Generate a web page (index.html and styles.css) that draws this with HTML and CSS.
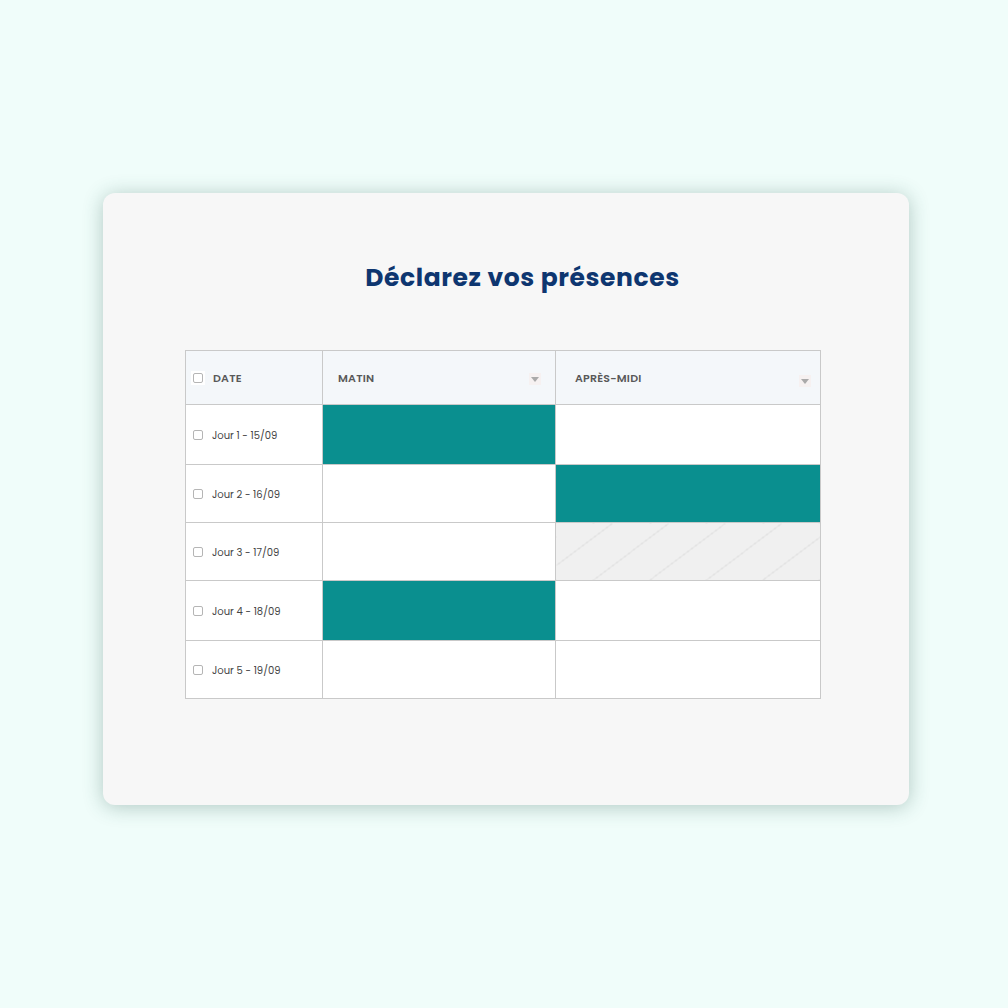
FILE: index.html
```html
<!DOCTYPE html>
<html lang="fr">
<head>
<meta charset="utf-8">
<title>Déclarez vos présences</title>
<link rel="stylesheet" href="styles.css">
</head>
<body>
<div class="card">
  <h1 class="title">Déclarez vos présences</h1>
  <table class="grid">
    <colgroup>
      <col class="c-date"><col class="c-matin"><col class="c-am">
    </colgroup>
    <thead>
      <tr>
        <th class="h-date"><span class="hbox"><span class="cb"></span></span>DATE</th>
        <th class="h-matin"><div class="hcell"><span>MATIN</span><span class="drop"></span></div></th>
        <th class="h-am"><div class="hcell"><span>APRÈS-MIDI</span><span class="drop"></span></div></th>
      </tr>
    </thead>
    <tbody>
      <tr class="r1"><td class="d"><span class="cb"></span>Jour 1 - 15/09</td><td class="on"></td><td></td></tr>
      <tr class="r2"><td class="d"><span class="cb"></span>Jour 2 - 16/09</td><td></td><td class="on"></td></tr>
      <tr class="r3"><td class="d"><span class="cb"></span>Jour 3 - 17/09</td><td></td><td class="off"></td></tr>
      <tr class="r4"><td class="d"><span class="cb"></span>Jour 4 - 18/09</td><td class="on"></td><td></td></tr>
      <tr class="r5"><td class="d"><span class="cb"></span>Jour 5 - 19/09</td><td></td><td></td></tr>
    </tbody>
  </table>
</div>
</body>
</html>
```
FILE: styles.css
```css
* { box-sizing: border-box; }
html, body { margin: 0; padding: 0; }
body {
  background: #f0fdfa;
  font-family: "Poppins", "Open Sans", "Noto Sans", sans-serif;
  padding: 193px 0 0 103px;
  min-height: 1008px;
}
.card {
  width: 806px;
  height: 612px;
  background: #f7f7f7;
  border-radius: 12px;
  box-shadow: 0 2px 20px rgba(40, 90, 80, 0.32);
  padding: 69px 89px 0 82px;
}
.title {
  margin: 0 0 56px 0;
  padding-left: 40px;
  text-align: center;
  font-size: 25px;
  line-height: 32px;
  font-weight: 700;
  color: #0e3670;
  letter-spacing: 0.6px;
}
.grid {
  border-collapse: collapse;
  table-layout: fixed;
  width: 635px;
  background: #fff;
}
.c-date { width: 137px; }
.c-matin { width: 233px; }
.c-am { width: 265px; }
.grid th, .grid td {
  border: 1px solid #c9c9c9;
  padding: 0;
}
.grid th {
  height: 54px;
  padding-top: 2px;
  background: #f4f7fa;
  font-size: 11px;
  font-weight: 600;
  color: #595959;
  text-align: left;
  letter-spacing: 0.2px;
}
.h-date { padding-left: 5px !important; }
.hbox {
  display: inline-flex;
  align-items: center;
  justify-content: center;
  width: 14px;
  height: 14px;
  background: #fff;
  margin-right: 8px;
  vertical-align: middle;
  margin-top: -2px;
}
.hbox .cb { margin: 0; }
.hcell {
  display: flex;
  align-items: center;
  justify-content: space-between;
}
.h-matin .hcell { padding: 0 14px 0 15px; }
.h-am .hcell { padding: 0 9px 0 19px; }
.drop {
  width: 12px;
  height: 12px;
  background: #f6f1f1;
  position: relative;
  margin-top: 1px;
}
.h-am .drop { margin-top: 4px; }
.drop::after {
  content: "";
  position: absolute;
  left: 2px;
  top: 4px;
  border-left: 4px solid transparent;
  border-right: 4px solid transparent;
  border-top: 5px solid #aaa;
}
.cb {
  display: inline-block;
  width: 10px;
  height: 10px;
  border: 1px solid #b5b5b5;
  border-radius: 2px;
  background: #fff;
  vertical-align: middle;
  margin-right: 9px;
}
.grid td { height: 58px; padding-top: 2px; }
.grid tr.r1 td, .grid tr.r4 td { height: 60px; }
.d {
  padding-left: 7px !important;
  font-size: 10px;
  color: #444;
}
.d .cb { margin-top: -1px; }
.on { background: #0a8f8f; }
.off {
  background-color: #f0f0f0;
  background-image: repeating-linear-gradient(143deg, transparent 0 33px, #e0e0e0 33px 34px);
}
```
